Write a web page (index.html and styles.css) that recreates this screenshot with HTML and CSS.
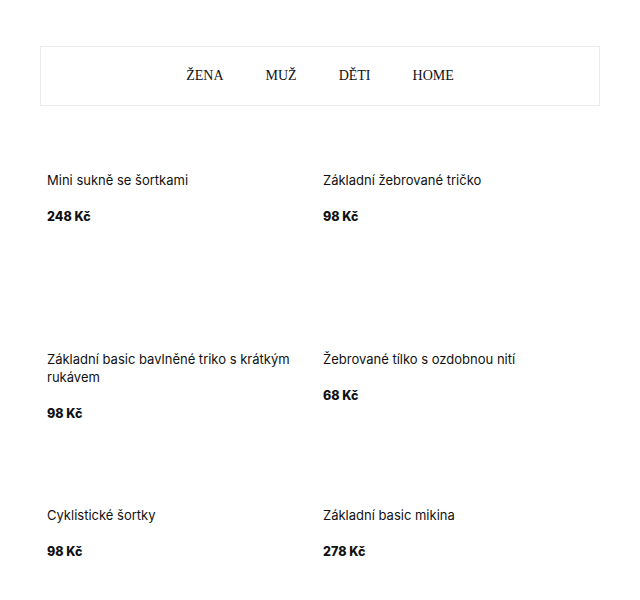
FILE: index.html
```html
<!DOCTYPE html>
<html lang="cs">
<head>
  <meta charset="UTF-8">
  <meta name="viewport" content="width=device-width, initial-scale=1.0">
  <title>Obchod</title>
  <link rel="stylesheet" href="styles.css">
</head>
<body>

<!-- Navigace -->
<div class="navbar">
  <a href="#">ŽENA</a>
  <a href="#">MUŽ</a>
  <a href="#">DĚTI</a>
  <a href="#">HOME</a>
</div>

<!-- Produkty -->
<div class="products">
  <div class="product">
    <div class="product-name">Mini sukně se šortkami</div>
    <div class="product-price">248 Kč</div>
  </div>
  <div class="product">
    <div class="product-name">Základní žebrované tričko</div>
    <div class="product-price">98 Kč</div>
  </div>
  <div class="product">
    <div class="product-name">Základní basic bavlněné triko s krátkým rukávem</div>
    <div class="product-price">98 Kč</div>
  </div>
  <div class="product">
    <div class="product-name">Žebrované tílko s ozdobnou nití</div>
    <div class="product-price">68 Kč</div>
  </div>
  <div class="product">
    <div class="product-name">Cyklistické šortky</div>
    <div class="product-price">98 Kč</div>
  </div>
  <div class="product">
    <div class="product-name">Základní basic mikina</div>
    <div class="product-price">278 Kč</div>
  </div>
</div>

</body>
</html>
```

FILE: styles.css
```css
/* Style global */
body {
  margin: 0;
  padding: 46px 40px 0 40px;
  background-color: #ffffff;
  color: #111111;
  font-family: Inter, "Noto Sans", sans-serif;
}

/* Navigace */
.navbar {
  height: 58px;
  border: 1px solid #ececec;
  display: flex;
  align-items: center;
  justify-content: center;
  gap: 42px;
}

.navbar a {
  font-family: "Liberation Serif", serif;
  font-size: 14px;
  color: #111111;
  text-decoration: none;
}

/* Produkty */
.products {
  display: grid;
  grid-template-columns: 276px 276px;
  grid-template-rows: 179px 156px auto;
  padding: 65px 0 0 7px;
}

.product-name {
  font-size: 13px;
  line-height: 18px;
  padding-right: 30px;
}

.product-price {
  font-size: 12.5px;
  font-weight: 800;
  line-height: 18px;
  margin-top: 19px;
}
```
